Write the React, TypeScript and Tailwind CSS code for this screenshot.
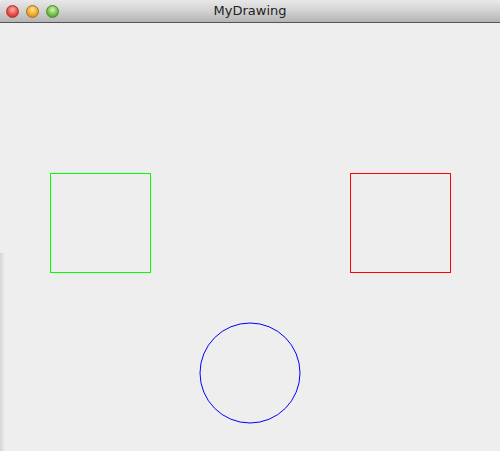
export default function App() {
  return (
    <div className="w-[500px] h-[451px] flex flex-col bg-[#eeeeee] overflow-hidden" style={{ fontFamily: '"DejaVu Sans", sans-serif' }}>
      <div className="relative h-[23px] shrink-0 flex items-center border-b border-[#555555] bg-gradient-to-b from-[#e8e8e8] via-[#d2d2d2] to-[#b4b4b4] rounded-t-[4px]">
        <div className="flex items-center gap-[7px] pl-[6px]">
          <span className="w-[13px] h-[13px] rounded-full border border-[#a33] bg-[radial-gradient(circle_at_50%_35%,#ffb3b0,#ec4b43_55%,#b9201b)]" />
          <span className="w-[13px] h-[13px] rounded-full border border-[#a77318] bg-[radial-gradient(circle_at_50%_35%,#ffe3a3,#f1a928_55%,#c17d0c)]" />
          <span className="w-[13px] h-[13px] rounded-full border border-[#4f8a2c] bg-[radial-gradient(circle_at_50%_35%,#d7f5b8,#72c04a_55%,#3f8a1f)]" />
        </div>
        <span className="absolute inset-x-0 text-center text-[13px] text-[#222] pointer-events-none">
          MyDrawing
        </span>
      </div>
      <div className="relative flex-1">
        <div className="absolute left-0 top-[230px] bottom-0 w-[5px] bg-gradient-to-r from-[#d4d4d4] to-[#eeeeee]" />
        <svg width="500" height="428" className="absolute inset-0">
          <rect x="50.5" y="150.5" width="100" height="99" fill="none" stroke="#00ff00" strokeWidth="1" />
          <rect x="350.5" y="150.5" width="100" height="99" fill="none" stroke="#ff0000" strokeWidth="1" />
          <circle cx="250" cy="350" r="50" fill="none" stroke="#0000ff" strokeWidth="1" />
        </svg>
      </div>
    </div>
  );
}
